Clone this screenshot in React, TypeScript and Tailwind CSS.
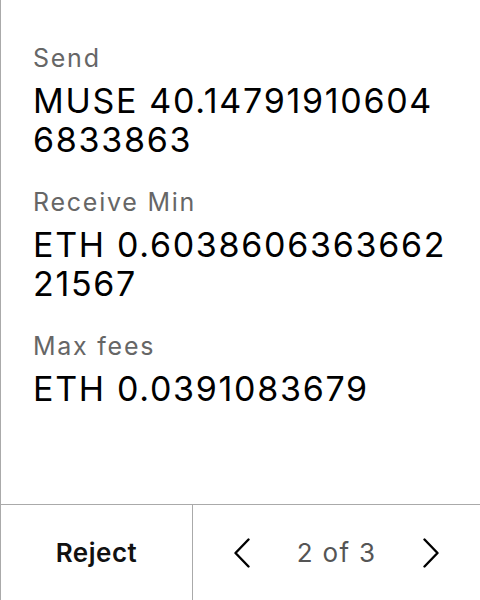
import React from 'react';

const rows = [
  { label: 'Send', value: 'MUSE 40.147919106046833863' },
  { label: 'Receive Min', value: 'ETH 0.603860636366221567' },
  { label: 'Max fees', value: 'ETH 0.0391083679' },
];

const Chevron: React.FC<{ dir: 'left' | 'right' }> = ({ dir }) => (
  <svg width="16" height="30" viewBox="0 0 16 30" fill="none" stroke="#000" strokeWidth="2.4" strokeLinecap="round" strokeLinejoin="round">
    {dir === 'left' ? <polyline points="14.5,1.5 1.5,15 14.5,28.5" /> : <polyline points="1.5,1.5 14.5,15 1.5,28.5" />}
  </svg>
);

const App: React.FC = () => {
  return (
    <div className="h-[600px] w-[480px] flex flex-col bg-white border-l border-[#aaaaaa] font-['Inter',sans-serif]">
      <div className="flex-1 pl-8 pr-[28px] pt-[42px] flex flex-col gap-[27px]">
        {rows.map(r => (
          <div key={r.label} className="flex flex-col gap-[7px]">
            <div className="text-[25px] leading-8 tracking-[0.07em] text-[#666666]">{r.label}</div>
            <div className="text-[34px] leading-[39px] tracking-[0.05em] text-black break-all">{r.value}</div>
          </div>
        ))}
      </div>
      <div className="h-[96px] flex border-t border-[#aaaaaa]">
        <button className="w-[191px] flex items-center justify-center text-[26px] tracking-[0.02em] font-semibold text-[#111111]">
          Reject
        </button>
        <div className="flex-1 flex items-center justify-center gap-[47px] border-l border-[#aaaaaa]">
          <Chevron dir="left" />
          <span className="text-[26px] tracking-[0.05em] text-[#555555]">2 of 3</span>
          <Chevron dir="right" />
        </div>
      </div>
    </div>
  );
};

export default App;
